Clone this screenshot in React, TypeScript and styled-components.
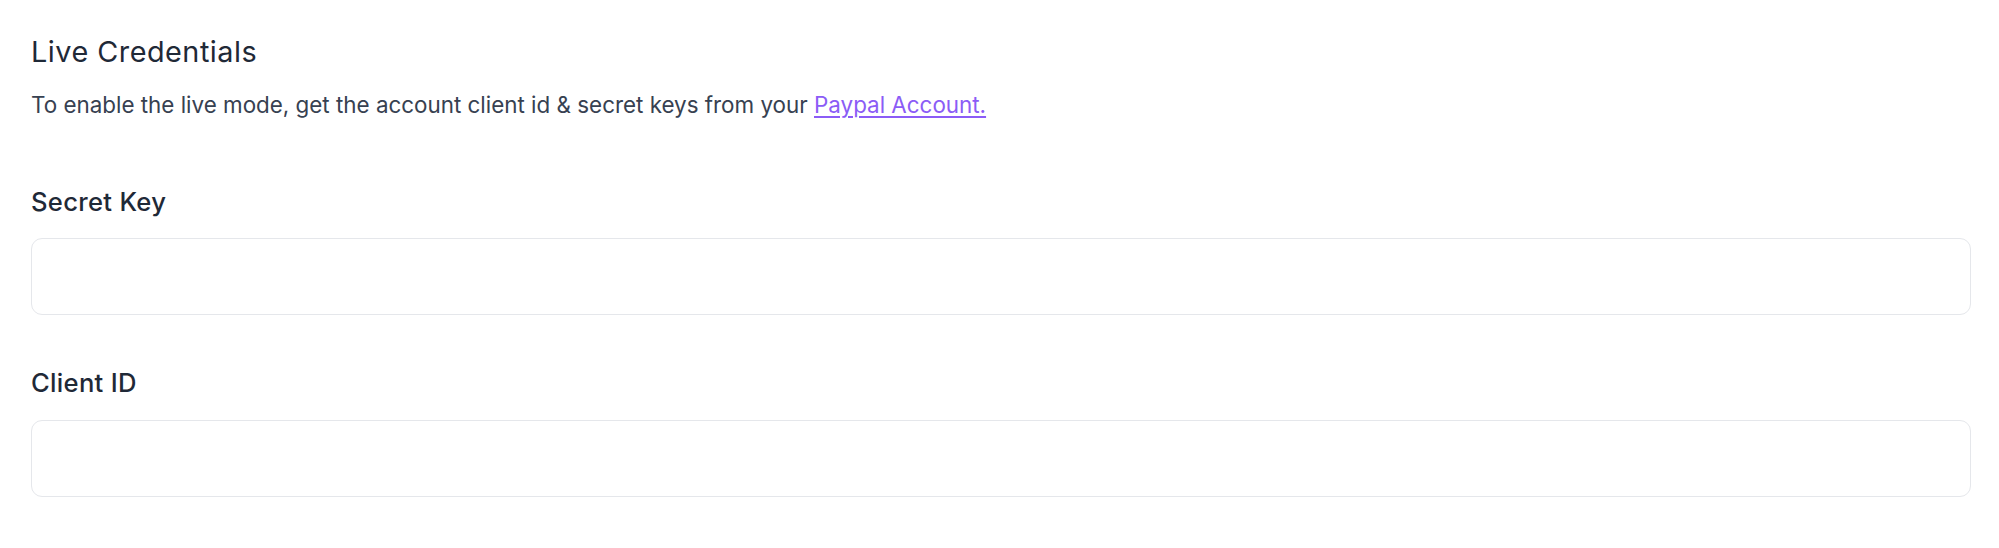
import React from "react";
import styled, { createGlobalStyle } from "styled-components";

const Global = createGlobalStyle`
  html, body { margin: 0; padding: 0; background: #ffffff; }
  body { font-family: Inter, "Noto Sans", sans-serif; -webkit-font-smoothing: antialiased; }
  * { box-sizing: border-box; }
`;

const Page = styled.div`
  padding: 30px 28px 40px 31px;
  display: flex;
  flex-direction: column;
`;

const Title = styled.h2`
  margin: 0;
  font-size: 28.8px;
  line-height: 44.8px;
  font-weight: 400;
  letter-spacing: 0.5px;
  color: #1f2937;
`;

const Description = styled.p`
  margin: 14px 0 0;
  font-size: 22.4px;
  line-height: 32px;
  font-weight: 400;
  color: #374151;
`;

const Link = styled.a`
  color: #8b5cf6;
  text-decoration: underline;
  text-underline-offset: 3px;
  text-decoration-thickness: 1.5px;
`;

const Field = styled.div<{ $gap: number }>`
  display: flex;
  flex-direction: column;
  gap: 17px;
  margin-top: ${(p) => p.$gap}px;
`;

const Label = styled.label`
  font-size: 25.6px;
  line-height: 38.4px;
  font-weight: 500;
  letter-spacing: 0.3px;
  color: #1f2937;
`;

const Input = styled.input`
  height: 77px;
  width: 100%;
  border: 1.5px solid #e5e7eb;
  border-radius: 11px;
  background: #fff;
  padding: 0 24px;
  font-family: inherit;
  font-size: 22px;
  color: #111827;
  outline: none;
`;

export default function App() {
  return (
    <>
      <Global />
      <Page>
        <Title>Live Credentials</Title>
        <Description>
          To enable the live mode, get the account client id &amp; secret keys from your{" "}
          <Link href="#">Paypal Account.</Link>
        </Description>
        <Field $gap={62}>
          <Label htmlFor="secret">Secret Key</Label>
          <Input id="secret" type="text" />
        </Field>
        <Field $gap={49}>
          <Label htmlFor="client">Client ID</Label>
          <Input id="client" type="text" />
        </Field>
      </Page>
    </>
  );
}
